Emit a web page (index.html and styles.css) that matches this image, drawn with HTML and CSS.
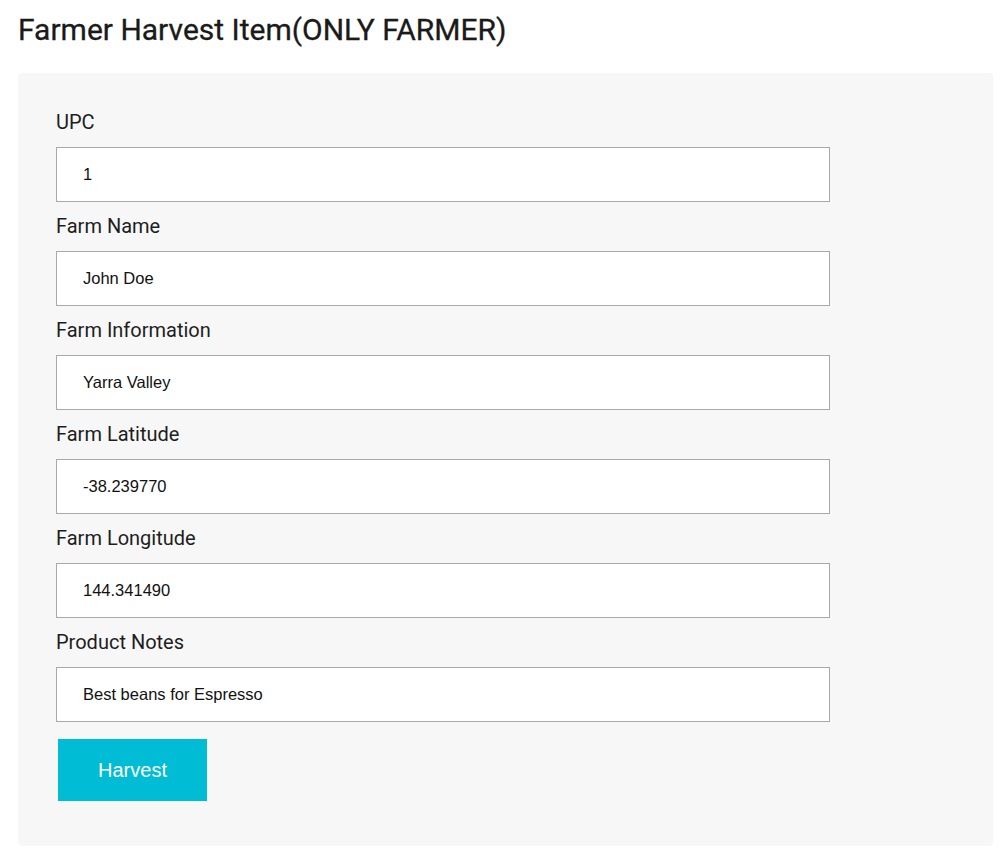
FILE: index.html
```html
<!DOCTYPE html>
<html lang="en">
<head>
<meta charset="utf-8">
<title>Farmer Harvest Item</title>
<link rel="stylesheet" href="styles.css">
</head>
<body>
<h2 class="title">Farmer Harvest Item(ONLY FARMER)</h2>
<form class="panel">
  <label class="label" for="upc">UPC</label>
  <input class="field" id="upc" type="text" value="1">
  <label class="label" for="farmName">Farm Name</label>
  <input class="field" id="farmName" type="text" value="John Doe">
  <label class="label" for="farmInfo">Farm Information</label>
  <input class="field" id="farmInfo" type="text" value="Yarra Valley">
  <label class="label" for="farmLat">Farm Latitude</label>
  <input class="field" id="farmLat" type="text" value="-38.239770">
  <label class="label" for="farmLong">Farm Longitude</label>
  <input class="field" id="farmLong" type="text" value="144.341490">
  <label class="label" for="notes">Product Notes</label>
  <input class="field" id="notes" type="text" value="Best beans for Espresso">
  <button class="btn" type="button">Harvest</button>
</form>
</body>
</html>
```

FILE: styles.css
```css
html, body {
  margin: 0;
  padding: 0;
  background: #ffffff;
}

body {
  padding: 13px 10px 10px 18px;
  font-family: Roboto, "Liberation Sans", Arial, sans-serif;
  color: #212121;
}

.title {
  margin: 0 0 26px 0;
  font-family: Roboto, "Liberation Sans", sans-serif;
  font-size: 30px;
  font-weight: 400;
  line-height: 34px;
  color: #1a1a1a;
  -webkit-text-stroke: 0.3px #1a1a1a;
}

.panel {
  display: flex;
  flex-direction: column;
  align-items: flex-start;
  background: #f7f7f7;
  border-radius: 4px;
  padding: 37px 38px 45px 38px;
  width: 975px;
  box-sizing: border-box;
}

.label {
  display: block;
  font-family: Roboto, "Liberation Sans", sans-serif;
  font-size: 20px;
  line-height: 25px;
  color: #1e1e1e;
  margin-bottom: 12px;
}

.field {
  display: block;
  box-sizing: border-box;
  width: 774px;
  height: 55px;
  margin: 0 0 12px 0;
  padding: 0 0 0 26px;
  border: 1px solid #a9a9a9;
  border-radius: 0;
  background: #ffffff;
  font-family: "Liberation Sans", Arial, sans-serif;
  font-size: 16.5px;
  color: #111;
  outline: none;
}

.btn {
  margin: 5px 0 0 2px;
  width: 149px;
  height: 62px;
  border: none;
  border-radius: 0;
  background: #00bcd4;
  color: #ffffff;
  font-family: "Liberation Sans", Arial, sans-serif;
  font-size: 20px;
  cursor: pointer;
}
```
